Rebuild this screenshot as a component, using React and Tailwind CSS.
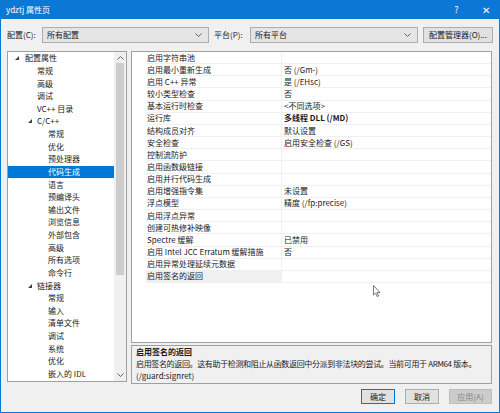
import React from 'react';

const tree = [
  { t: '配置属性', lvl: 0, open: true },
  { t: '常规', lvl: 1 },
  { t: '高级', lvl: 1 },
  { t: '调试', lvl: 1 },
  { t: 'VC++ 目录', lvl: 1 },
  { t: 'C/C++', lvl: 1, open: true },
  { t: '常规', lvl: 2 },
  { t: '优化', lvl: 2 },
  { t: '预处理器', lvl: 2 },
  { t: '代码生成', lvl: 2, sel: true },
  { t: '语言', lvl: 2 },
  { t: '预编译头', lvl: 2 },
  { t: '输出文件', lvl: 2 },
  { t: '浏览信息', lvl: 2 },
  { t: '外部包含', lvl: 2 },
  { t: '高级', lvl: 2 },
  { t: '所有选项', lvl: 2 },
  { t: '命令行', lvl: 2 },
  { t: '链接器', lvl: 1, open: true },
  { t: '常规', lvl: 2 },
  { t: '输入', lvl: 2 },
  { t: '清单文件', lvl: 2 },
  { t: '调试', lvl: 2 },
  { t: '系统', lvl: 2 },
  { t: '优化', lvl: 2 },
  { t: '嵌入的 IDL', lvl: 2 },
];

const props = [
  ['启用字符串池', ''],
  ['启用最小重新生成', '否 (/Gm-)'],
  ['启用 C++ 异常', '是 (/EHsc)'],
  ['较小类型检查', '否'],
  ['基本运行时检查', '<不同选项>'],
  ['运行库', '多线程 DLL (/MD)', true],
  ['结构成员对齐', '默认设置'],
  ['安全检查', '启用安全检查 (/GS)'],
  ['控制流防护', ''],
  ['启用函数级链接', ''],
  ['启用并行代码生成', ''],
  ['启用增强指令集', '未设置'],
  ['浮点模型', '精度 (/fp:precise)'],
  ['启用浮点异常', ''],
  ['创建可热修补映像', ''],
  ['Spectre 缓解', '已禁用'],
  ['启用 Intel JCC Erratum 缓解措施', '否'],
  ['启用异常处理延续元数据', ''],
  ['启用签名的返回', ''],
];

const indent = ['pl-[17px]', 'pl-[29px]', 'pl-[40px]'];
const arrowPos = ['left-[7px]', 'left-[20px]', 'left-[32px]'];

const Chevron = ({ up }) => (
  <svg width="7" height="4" viewBox="0 0 7 4" className={up ? 'rotate-180' : ''}>
    <path d="M0.5 0.5 L3.5 3.5 L6.5 0.5" fill="none" stroke="#606060" strokeWidth="1" />
  </svg>
);

const Select = ({ value, className }) => (
  <div className={`h-[16px] flex items-center justify-between border border-[#adadad] bg-[#e5e5e5] pl-[4px] pr-[6px] ${className}`}>
    <span>{value}</span>
    <Chevron />
  </div>
);

export default function App() {
  return (
    <div className="relative w-[500px] h-[413px] flex flex-col bg-[#f0f0f0] text-[8px] leading-none text-[#1a1a1a] font-[family-name:'Noto_Sans_CJK_SC',sans-serif] overflow-hidden">
      {/* title bar */}
      <div className="h-[19px] shrink-0 bg-[#0b78d5] text-white flex items-center pl-[6px]">
        <span className="flex-1">ydztj 属性页</span>
        <span className="w-[29px] text-center text-[9px]">?</span>
        <span className="w-[29px] text-center text-[10px] font-light">✕</span>
      </div>

      <div className="flex-1 flex flex-col border-x border-b border-[#0b78d5] px-[6px]">
        {/* config row */}
        <div className="mt-[8px] h-[16px] flex items-center">
          <span className="w-[35px]">配置(C):</span>
          <Select value="所有配置" className="w-[167px]" />
          <span className="ml-[5px] w-[36px]">平台(P):</span>
          <Select value="所有平台" className="w-[168px]" />
          <div className="ml-[5px] w-[70px] h-[16px] flex items-center justify-center border border-[#adadad] bg-[#e1e1e1]">
            配置管理器(O)...
          </div>
        </div>

        {/* panels */}
        <div className="mt-[8px] flex gap-[4px]">
          {/* tree */}
          <div className="w-[120px] h-[331px] border border-[#a0a0a0] bg-white flex">
            <div className="flex-1">
              {tree.map((n, i) => (
                <div
                  key={i}
                  className={`relative h-[12.64px] flex items-center ${indent[n.lvl]} ${n.sel ? 'bg-[#0078d7] text-white' : ''}`}
                >
                  {n.open && (
                    <svg width="4" height="4" viewBox="0 0 4 4" className={`absolute ${arrowPos[n.lvl]}`}>
                      <polygon points="4,0 4,4 0,4" fill="#404040" />
                    </svg>
                  )}
                  {n.t}
                </div>
              ))}
            </div>
            <div className="w-[12px] bg-[#f0f0f0] flex flex-col items-center">
              <div className="h-[11px] flex items-center">
                <Chevron up />
              </div>
              <div className="w-[8px] h-[212px] bg-[#cdcdcd]" />
              <div className="flex-1" />
              <div className="h-[12px] flex items-center">
                <Chevron />
              </div>
            </div>
          </div>

          {/* property grid + description */}
          <div className="w-[361px] flex flex-col gap-[2px]">
            <div className="h-[292px] border border-[#a0a0a0] bg-white flex">
              <div className="w-[14px]" />
              <div className="flex-1">
                {props.map(([k, v, bold], i) => (
                  <div key={i} className="h-[12.17px] flex border-b border-[#f0f0f0]">
                    <div className={`w-[136px] flex items-center pl-[1px] border-r border-[#f0f0f0] ${i === props.length - 1 ? 'bg-[#f0f0f0]' : ''}`}>
                      {k}
                    </div>
                    <div className={`flex-1 flex items-center pl-[2px] ${bold ? 'font-bold' : ''}`}>{v}</div>
                  </div>
                ))}
              </div>
            </div>
            <div className="h-[39px] border border-[#a0a0a0] bg-[#f0f0f0] px-[4px] pt-[2px] flex flex-col gap-[4px]">
              <div className="font-bold">启用签名的返回</div>
              <div className="whitespace-nowrap tracking-[-0.35px]">
                启用签名的返回。这有助于检测和阻止从函数返回中分派到非法块的尝试。当前可用于 ARM64 版本。
              </div>
              <div>(/guard:signret)</div>
            </div>
          </div>
        </div>

        {/* buttons */}
        <div className="mt-[5px] flex justify-end gap-[10px] pr-[1px]">
          <div className="w-[34px] h-[15px] flex items-center justify-center border border-[#0078d7] bg-[#e1e1e1]">确定</div>
          <div className="w-[34px] h-[15px] flex items-center justify-center border border-[#adadad] bg-[#e1e1e1]">取消</div>
          <div className="w-[43px] h-[15px] flex items-center justify-center border border-[#bfbfbf] bg-[#cccccc] text-[#838383]">应用(A)</div>
        </div>
      </div>

      {/* mouse pointer */}
      <svg width="8" height="13" viewBox="0 0 8 13" className="absolute left-[373px] top-[285px]">
        <path d="M0.5 0.5 L0.5 10 L2.6 8 L4.2 11.6 L5.6 11 L4 7.5 L7 7.5 Z" fill="#fff" stroke="#555" strokeWidth="0.8" />
      </svg>
    </div>
  );
}
